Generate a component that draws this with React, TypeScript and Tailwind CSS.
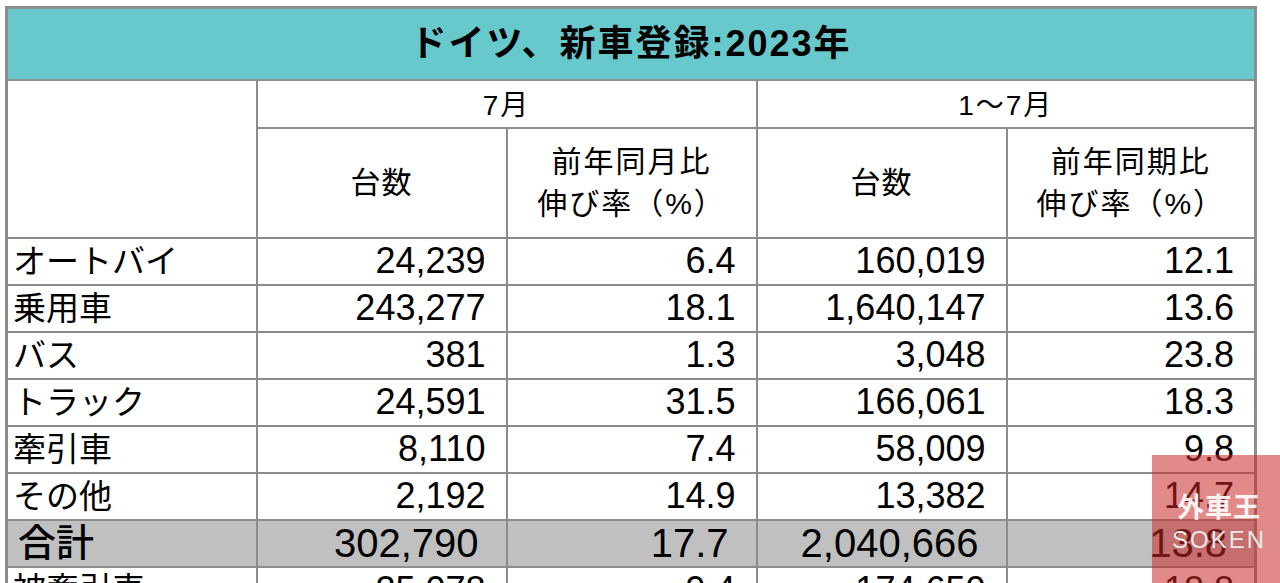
import React from "react";

const rows = [
  ["オートバイ", "24,239", "6.4", "160,019", "12.1"],
  ["乗用車", "243,277", "18.1", "1,640,147", "13.6"],
  ["バス", "381", "1.3", "3,048", "23.8"],
  ["トラック", "24,591", "31.5", "166,061", "18.3"],
  ["牽引車", "8,110", "7.4", "58,009", "9.8"],
  ["その他", "2,192", "14.9", "13,382", "14.7"],
];

const total = ["合計", "302,790", "17.7", "2,040,666", "13.8"];
const trailer = ["被牽引車", "25,078", "9.4", "174,650", "18.8"];

const font = { fontFamily: '"Liberation Sans", "Noto Sans CJK JP", sans-serif' };

const cell = "border-2 border-[#8c8c8c] p-0";

const DataRow = ({ r }: { r: string[] }) => (
  <tr className="h-[47px]">
    <td className={`${cell} pl-[5px] text-[33px] leading-none`}>{r[0]}</td>
    {r.slice(1).map((v, i) => (
      <td key={i} className={`${cell} pr-[20px] text-right text-[36px] leading-none`}>
        {v}
      </td>
    ))}
  </tr>
);

export default function App() {
  return (
    <div className="relative h-[583px] w-[1280px] overflow-hidden bg-white text-black" style={font}>
      <table className="ml-[5px] mt-[6px] w-[1249px] table-fixed border-collapse border-[3px] border-[#8c8c8c]">
        <colgroup>
          <col className="w-[250px]" />
          <col className="w-[250px]" />
          <col className="w-[250px]" />
          <col className="w-[250px]" />
          <col className="w-[249px]" />
        </colgroup>
        <tbody>
          <tr className="h-[72px]">
            <td colSpan={5} className={`${cell} bg-[#68c9cc] text-center text-[36px] font-bold tracking-[2px]`}>
              ドイツ、新車登録:2023年
            </td>
          </tr>
          <tr className="h-[47px]">
            <td rowSpan={2} className={cell}></td>
            <td colSpan={2} className={`${cell} pt-[4px] text-center text-[28px] tracking-[2px]`}>7月</td>
            <td colSpan={2} className={`${cell} pt-[4px] text-center text-[28px] tracking-[2px]`}>1〜7月</td>
          </tr>
          <tr className="h-[110px]">
            <td className={`${cell} text-center text-[30px] tracking-[1px]`}>台数</td>
            <td className={`${cell} text-center text-[30px] leading-[42px] tracking-[2px]`}>
              前年同月比
              <br />
              伸び率（%）
            </td>
            <td className={`${cell} text-center text-[30px] tracking-[1px]`}>台数</td>
            <td className={`${cell} text-center text-[30px] leading-[42px] tracking-[2px]`}>
              前年同期比
              <br />
              伸び率（%）
            </td>
          </tr>
          {rows.map((r) => (
            <DataRow key={r[0]} r={r} />
          ))}
          <tr className="h-[47px] bg-[#c0c0c0]">
            <td className={`${cell} pl-[10px] text-[38px] font-medium leading-none`}>{total[0]}</td>
            {total.slice(1).map((v, i) => (
              <td key={i} className={`${cell} pr-[27px] text-right text-[40px] font-medium leading-none`}>
                {v}
              </td>
            ))}
          </tr>
          <DataRow r={trailer} />
        </tbody>
      </table>

      <div className="absolute left-[1152px] top-[455px] flex h-[128px] w-[128px] flex-col items-center bg-[rgba(202,40,40,0.55)] pl-[6px] pt-[37px]">
        <span className="text-[27px] font-bold leading-none tracking-[1px] text-white/90" style={{ fontFamily: '"Noto Sans CJK JP", sans-serif' }}>
          外車王
        </span>
        <span className="mt-[9px] text-[24px] leading-none tracking-[2px] text-[#e8e8e8]" style={{ fontFamily: '"Liberation Sans", sans-serif' }}>
          SOKEN
        </span>
      </div>
    </div>
  );
}
